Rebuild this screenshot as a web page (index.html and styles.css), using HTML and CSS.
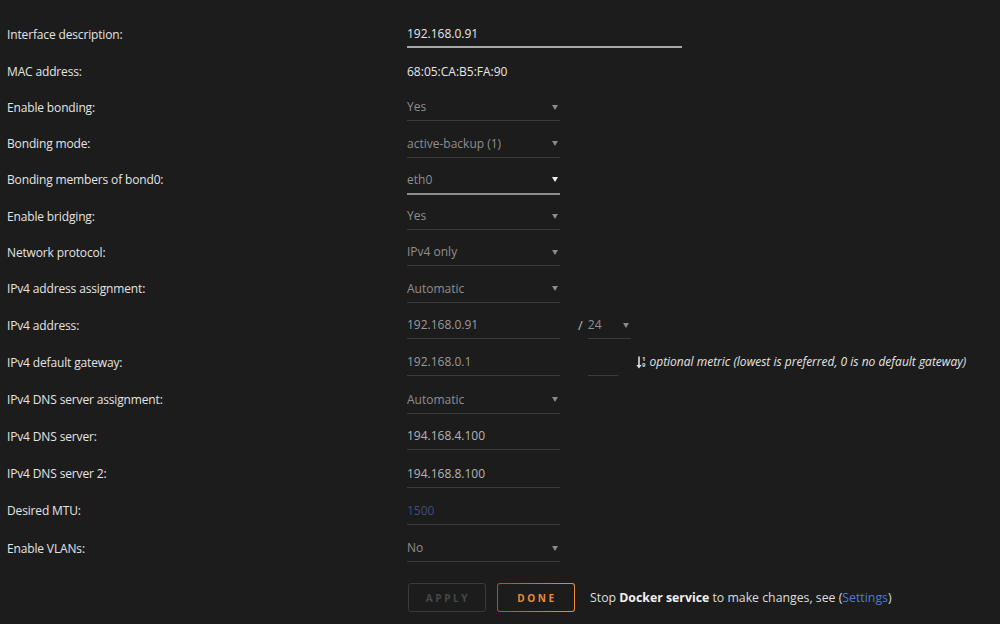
FILE: index.html
```html
<!DOCTYPE html>
<html>
<head>
<meta charset="utf-8">
<link rel="stylesheet" href="styles.css">
</head>
<body>
<div class="form">
  <div class="row r-first">
    <div class="label">Interface description:</div>
    <div class="field"><div class="ctl input wide focus val-bright">192.168.0.91</div></div>
  </div>
  <div class="row r-text">
    <div class="label">MAC address:</div>
    <div class="field"><div class="plain">68:05:CA:B5:FA:90</div></div>
  </div>
  <div class="row r-sel">
    <div class="label">Enable bonding:</div>
    <div class="field"><div class="ctl select"><span>Yes</span><i class="caret"></i></div></div>
  </div>
  <div class="row r-sel">
    <div class="label">Bonding mode:</div>
    <div class="field"><div class="ctl select"><span>active-backup (1)</span><i class="caret"></i></div></div>
  </div>
  <div class="row r-sel">
    <div class="label">Bonding members of bond0:</div>
    <div class="field"><div class="ctl select focus"><span>eth0</span><i class="caret bright"></i></div></div>
  </div>
  <div class="row r-sel">
    <div class="label">Enable bridging:</div>
    <div class="field"><div class="ctl select"><span>Yes</span><i class="caret"></i></div></div>
  </div>
  <div class="row r-sel">
    <div class="label">Network protocol:</div>
    <div class="field"><div class="ctl select"><span>IPv4 only</span><i class="caret"></i></div></div>
  </div>
  <div class="row r-sel">
    <div class="label">IPv4 address assignment:</div>
    <div class="field"><div class="ctl select"><span>Automatic</span><i class="caret"></i></div></div>
  </div>
  <div class="row r-in">
    <div class="label">IPv4 address:</div>
    <div class="field">
      <div class="ctl input">192.168.0.91</div>
      <span class="slash">/</span>
      <div class="ctl select mask"><span>24</span><i class="caret"></i></div>
    </div>
  </div>
  <div class="row r-in">
    <div class="label">IPv4 default gateway:</div>
    <div class="field">
      <div class="ctl input">192.168.0.1</div>
      <div class="ctl input metric"></div>
      <span class="hint">
        <span class="sort-icon">
          <svg width="6" height="13" viewBox="0 0 6 13"><path d="M3 0.5V11" stroke="#ddd" stroke-width="1.6"/><path d="M0.3 9L3 12.6L5.7 9Z" fill="#ddd"/></svg>
          <span class="digits"><span>1</span><span>9</span></span>
        </span>
        <em>optional metric (lowest is preferred, 0 is no default gateway)</em>
      </span>
    </div>
  </div>
  <div class="row r-sel">
    <div class="label">IPv4 DNS server assignment:</div>
    <div class="field"><div class="ctl select"><span>Automatic</span><i class="caret"></i></div></div>
  </div>
  <div class="row r-in">
    <div class="label">IPv4 DNS server:</div>
    <div class="field"><div class="ctl input val-mid">194.168.4.100</div></div>
  </div>
  <div class="row r-in">
    <div class="label">IPv4 DNS server 2:</div>
    <div class="field"><div class="ctl input val-mid">194.168.8.100</div></div>
  </div>
  <div class="row r-in">
    <div class="label">Desired MTU:</div>
    <div class="field"><div class="ctl input placeholder">1500</div></div>
  </div>
  <div class="row r-sel">
    <div class="label">Enable VLANs:</div>
    <div class="field"><div class="ctl select"><span>No</span><i class="caret"></i></div></div>
  </div>
  <div class="actions">
    <button class="btn apply">APPLY</button>
    <button class="btn done">DONE</button>
    <span class="note">Stop <b>Docker service</b> to make changes, see (<a class="link">Settings</a>)</span>
  </div>
</div>
</body>
</html>
```

FILE: styles.css
```css
html, body {
  margin: 0;
  padding: 0;
  background: #1c1c1c;
}
body {
  font-family: "Open Sans", "Noto Sans", sans-serif;
  font-size: 12px;
  color: #e2e2e2;
  width: 1000px;
  height: 624px;
  overflow: hidden;
}
.form {
  padding: 16px 0 0 7px;
}
.row {
  display: flex;
  align-items: flex-start;
  height: 36.3px;
}
.row.r-first { height: 37.8px; }
.row.r-text { height: 35.5px; }
.row.r-sel { height: 36.3px; }
.row.r-in { height: 37.4px; }
.label {
  width: 400px;
  flex: none;
  margin-top: 8.5px;
  line-height: 20px;
  letter-spacing: -0.15px;
  color: #e4e4e4;
}
.field {
  display: flex;
  align-items: flex-start;
}
.plain {
  margin-top: 8px;
  line-height: 20px;
  color: #e6e6e6;
}
.ctl {
  box-sizing: content-box;
  width: 153px;
  height: 20px;
  line-height: 20px;
  margin-top: 8px;
  padding-bottom: 3px;
  border-bottom: 1px solid #3b3b3b;
  color: #9a9a9a;
  white-space: nowrap;
}
.ctl.wide { width: 275px; }
.ctl.focus {
  border-bottom: 2px solid #8e8e8e;
}
.ctl.input.focus { border-bottom-color: #a8a8a8; padding-bottom: 2px; }
.val-bright { color: #e6e6e6; }
.val-mid { color: #b4b4b4; }
.placeholder { color: #3f4c7c; }
.select {
  display: flex;
  align-items: center;
  justify-content: space-between;
  color: #8e8e8e;
}
.caret {
  width: 0;
  height: 0;
  margin-right: 2px;
  border-left: 3px solid transparent;
  border-right: 3px solid transparent;
  border-top: 5px solid #8a8a8a;
}
.caret.bright { border-top-color: #f2f2f2; }
.slash {
  margin: 8px 5px 0 18px;
  line-height: 20px;
  font-size: 13px;
  color: #bdbdbd;
}
.ctl.mask { width: 43px; }
.ctl.metric {
  width: 30px;
  margin-left: 28px;
}
.hint {
  display: flex;
  align-items: center;
  margin: 8px 0 0 18px;
  line-height: 20px;
  color: #e4e4e4;
}
.sort-icon {
  display: inline-flex;
  align-items: center;
  margin-right: 4px;
}
.digits {
  display: flex;
  flex-direction: column;
  font-size: 6px;
  line-height: 6px;
  font-weight: 700;
  color: #ddd;
}
.hint em {
  font-style: italic;
}
.actions {
  display: flex;
  align-items: center;
  margin: 16.5px 0 0 401px;
}
.btn {
  box-sizing: border-box;
  width: 78px;
  height: 29px;
  border-radius: 3px;
  font-family: "Open Sans", "Noto Sans", sans-serif;
  font-size: 10px;
  font-weight: 700;
  letter-spacing: 2.6px;
  padding: 0 0 0 2px;
  cursor: default;
}
.btn.apply {
  border: 1px solid #3a3a3a;
  background: #1c1c1c;
  color: #474747;
}
.btn.done {
  margin-left: 11px;
  border: 1px solid transparent;
  background: linear-gradient(#1c1c1c, #1c1c1c) padding-box,
              linear-gradient(90deg, #e0342a, #f38a33) border-box;
  color: #ec8836;
}
.note {
  margin-left: 15px;
  font-size: 12.3px;
  color: #dcdcdc;
}
.note b {
  font-weight: 700;
  color: #f0f0f0;
}
.link {
  color: #4d7bd0;
}
```
